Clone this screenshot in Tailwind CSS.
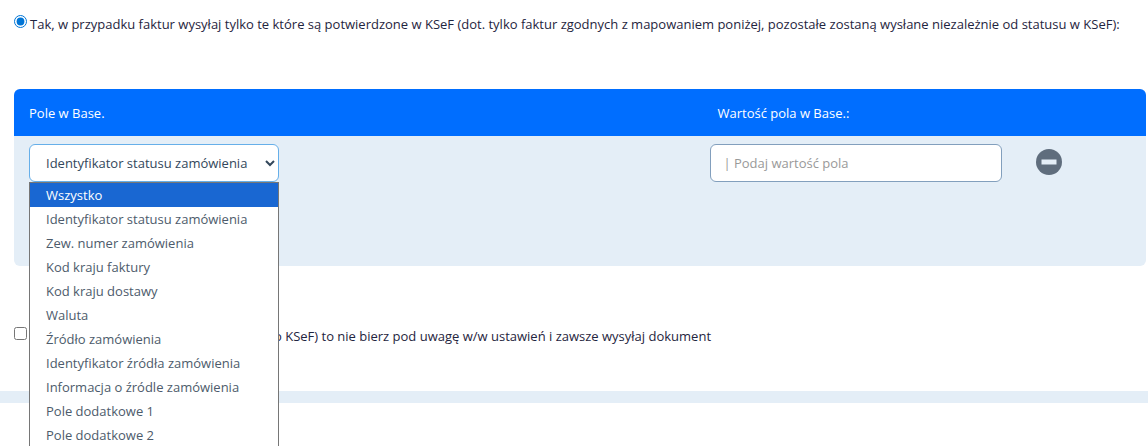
<!DOCTYPE html>
<html lang="pl">
<head>
<meta charset="utf-8">
<meta name="viewport" content="width=device-width, initial-scale=1">
<title>Ustawienia KSeF</title>
<script src="https://cdn.jsdelivr.net/npm/@tailwindcss/browser@4"></script>
</head>
<body class="h-screen overflow-hidden bg-white font-['Open_Sans',sans-serif] text-[13px] leading-5 text-[#1f2540]">
<main>
  <div class="flex items-start gap-[3px] pl-3.5 pt-3.5">
    <input type="radio" id="confirmed" name="mode" checked class="mt-px size-[13px] shrink-0 accent-[#0075d6]">
    <label for="confirmed">Tak, w przypadku faktur wysyłaj tylko te które są potwierdzone w KSeF (dot. tylko faktur zgodnych z mapowaniem poniżej, pozostałe zostaną wysłane niezależnie od statusu w KSeF):</label>
  </div>

  <div class="mt-[55px] pl-3.5 pr-0.5">
    <table class="w-full table-fixed border-separate border-spacing-0">
      <colgroup><col class="w-[60.2%]"><col class="w-[28%]"><col></colgroup>
      <thead>
        <tr class="h-[47px] text-left text-white">
          <th scope="col" class="rounded-tl-md bg-[#006eff] px-[15px] font-medium">Pole w Base.</th>
          <th scope="col" class="bg-[#006eff] px-[22px] font-medium">Wartość pola w Base.:</th>
          <td class="rounded-tr-md bg-[#006eff]"></td>
        </tr>
      </thead>
      <tbody>
        <tr class="h-[130px] align-top">
          <td class="rounded-bl-md bg-[#e4eef7] px-[15px] pt-2">
            <div class="relative w-[250px]">
              <select aria-label="Pole w Base." class="block h-[38px] w-full rounded-md border border-[#66afe9] bg-white pl-3 font-medium text-[#33475b]">
                <option>Identyfikator statusu zamówienia</option>
              </select>
              <ul role="listbox" aria-label="Pole w Base." class="absolute inset-x-0 top-full z-10 border border-[#767676] bg-white leading-6 text-[#4d5b6b]">
                <li role="option" aria-selected="true" class="bg-[#1967d2] px-4 font-medium text-white">Wszystko</li>
                <li role="option" class="px-4">Identyfikator statusu zamówienia</li>
                <li role="option" class="px-4">Zew. numer zamówienia</li>
                <li role="option" class="px-4">Kod kraju faktury</li>
                <li role="option" class="px-4">Kod kraju dostawy</li>
                <li role="option" class="px-4">Waluta</li>
                <li role="option" class="px-4">Źródło zamówienia</li>
                <li role="option" class="px-4">Identyfikator źródła zamówienia</li>
                <li role="option" class="px-4">Informacja o źródle zamówienia</li>
                <li role="option" class="px-4">Pole dodatkowe 1</li>
                <li role="option" class="px-4">Pole dodatkowe 2</li>
              </ul>
            </div>
          </td>
          <td class="bg-[#e4eef7] pl-[15px] pt-2">
            <input type="text" aria-label="Wartość pola w Base." placeholder="| Podaj wartość pola" class="block h-[38px] w-[292px] rounded-md border border-[#829fbd] bg-white px-3 font-medium placeholder:text-[#999999]">
          </td>
          <td class="rounded-br-md bg-[#e4eef7] pl-[23px] pt-3">
            <button type="button" aria-label="Usuń" class="block">
              <svg class="size-7" viewBox="0 0 28 28" aria-hidden="true"><circle cx="14" cy="14" r="13" fill="#5f6d7d"/><rect x="6.500" y="11.500" width="15" height="5" fill="#e4eef7"/></svg>
            </button>
          </td>
        </tr>
      </tbody>
    </table>
  </div>

  <div class="mt-[60px] flex items-start gap-[247px] pl-3.5">
    <input type="checkbox" id="always" class="mt-px size-[13px] shrink-0">
    <label for="always">o KSeF) to nie bierz pod uwagę w/w ustawień i zawsze wysyłaj dokument</label>
  </div>

  <div class="mt-[45px] h-3 bg-[#e4eef7]"></div>
</main>
</body>
</html>
